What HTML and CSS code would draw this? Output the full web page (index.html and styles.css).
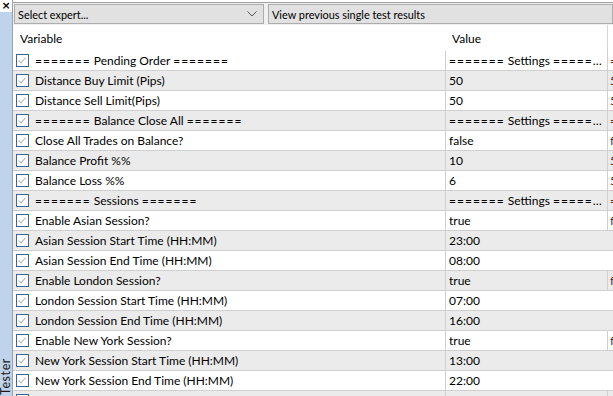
FILE: index.html
```html
<!DOCTYPE html>
<html lang="en">
<head>
  <meta charset="UTF-8" />
  <title>Strategy Tester - Inputs</title>
  <link rel="stylesheet" href="styles.css">
</head>
<body>
  <div class="side">
    <div class="side-close">×</div>
    <div class="side-bar"><span class="side-title">Tester</span></div>
  </div>

  <div class="main">
    <div class="toolbar">
      <div class="select">
        <span>Select expert...</span>
        <svg class="chev" width="10" height="6" viewBox="0 0 10 6"><polyline points="0.5,0.5 5,5 9.5,0.5" fill="none" stroke="#555" stroke-width="1"/></svg>
      </div>
      <div class="btn">View previous single test results</div>
    </div>

    <div class="grid">
      <div class="head">
        <div class="h-var">Variable</div>
        <div class="h-val">Value</div>
        <div class="h-extra"></div>
      </div>

      <div class="row"><div class="c-var"><i class="chk"></i><span class="eq">=======</span>&nbsp;Pending Order&nbsp;<span class="eq">=======</span></div><div class="c-val"><span class="eq">=======</span> Settings <span class="eq">=======</span></div><div class="c-extra">=</div></div>
      <div class="row"><div class="c-var"><i class="chk"></i>Distance Buy Limit (Pips)</div><div class="c-val">50</div><div class="c-extra">5</div></div>
      <div class="row"><div class="c-var"><i class="chk"></i>Distance Sell Limit(Pips)</div><div class="c-val">50</div><div class="c-extra">5</div></div>
      <div class="row"><div class="c-var"><i class="chk"></i><span class="eq">=======</span>&nbsp;Balance Close All&nbsp;<span class="eq">=======</span></div><div class="c-val"><span class="eq">=======</span> Settings <span class="eq">=======</span></div><div class="c-extra">=</div></div>
      <div class="row"><div class="c-var"><i class="chk"></i>Close All Trades on Balance?</div><div class="c-val">false</div><div class="c-extra">f</div></div>
      <div class="row"><div class="c-var"><i class="chk"></i>Balance Profit %%</div><div class="c-val">10</div><div class="c-extra">5</div></div>
      <div class="row"><div class="c-var"><i class="chk"></i>Balance Loss %%</div><div class="c-val">6</div><div class="c-extra">5</div></div>
      <div class="row"><div class="c-var"><i class="chk"></i><span class="eq">=======</span>&nbsp;Sessions&nbsp;<span class="eq">=======</span></div><div class="c-val"><span class="eq">=======</span> Settings <span class="eq">=======</span></div><div class="c-extra">=</div></div>
      <div class="row"><div class="c-var"><i class="chk"></i>Enable Asian Session?</div><div class="c-val">true</div><div class="c-extra">f</div></div>
      <div class="row"><div class="c-var"><i class="chk"></i>Asian Session Start Time (HH:MM)</div><div class="c-val">23:00</div><div class="c-extra empty"></div></div>
      <div class="row"><div class="c-var"><i class="chk"></i>Asian Session End Time (HH:MM)</div><div class="c-val">08:00</div><div class="c-extra empty"></div></div>
      <div class="row"><div class="c-var"><i class="chk"></i>Enable London Session?</div><div class="c-val">true</div><div class="c-extra">f</div></div>
      <div class="row"><div class="c-var"><i class="chk"></i>London Session Start Time (HH:MM)</div><div class="c-val">07:00</div><div class="c-extra empty"></div></div>
      <div class="row"><div class="c-var"><i class="chk"></i>London Session End Time (HH:MM)</div><div class="c-val">16:00</div><div class="c-extra empty"></div></div>
      <div class="row"><div class="c-var"><i class="chk"></i>Enable New York Session?</div><div class="c-val">true</div><div class="c-extra">f</div></div>
      <div class="row"><div class="c-var"><i class="chk"></i>New York Session Start Time (HH:MM)</div><div class="c-val">13:00</div><div class="c-extra empty"></div></div>
      <div class="row"><div class="c-var"><i class="chk"></i>New York Session End Time (HH:MM)</div><div class="c-val">22:00</div><div class="c-extra empty"></div></div>
      <div class="row"><div class="c-var"><i class="chk"></i></div><div class="c-val"></div><div class="c-extra">=</div></div>
    </div>
  </div>
</body>
</html>
```

FILE: styles.css
```css
* { margin: 0; padding: 0; box-sizing: border-box; }

body {
  width: 613px;
  height: 396px;
  overflow: hidden;
  display: flex;
  background: #fff;
  font-family: Lato, "Noto Sans", sans-serif;
  font-size: 12px;
  color: #000;
}

/* left docked tab */
.side {
  width: 13px;
  flex-shrink: 0;
  display: flex;
  flex-direction: column;
  border-right: 1px solid #a0a0a0;
}

.side-close {
  height: 12px;
  font-family: "DejaVu Sans", sans-serif;
  font-size: 11px;
  font-weight: bold;
  line-height: 12px;
  text-align: center;
  background: #fff;
}

.side-bar {
  flex: 1;
  background: #bfd3eb;
  display: flex;
  flex-direction: column;
  justify-content: flex-end;
  align-items: center;
}

.side-title {
  writing-mode: vertical-rl;
  transform: rotate(180deg);
  font-size: 12.5px;
  line-height: 12px;
  letter-spacing: 0.6px;
  color: #1a1a1a;
  padding-top: 1px;
}

.main {
  flex: 1;
  display: flex;
  flex-direction: column;
  overflow: hidden;
}

/* toolbar */
.toolbar {
  flex-shrink: 0;
  height: 23px;
  margin-top: 2px;
  border-top: 1px solid #a0a0a0;
  background: #f0f0f0;
  display: flex;
  gap: 4px;
  padding: 1px 0 1px 1px;
}

.select, .btn {
  height: 20px;
  border: 1px solid #adadad;
  background: #e1e1e1;
  display: flex;
  align-items: center;
  padding-left: 3px;
  white-space: nowrap;
  font-size: 10.9px;
}

.select {
  width: 250px;
  justify-content: space-between;
  padding-right: 6px;
}

.btn { flex: 1; }

/* inputs grid */
.grid {
  flex: 1;
  display: flex;
  flex-direction: column;
}

.head, .row {
  flex-shrink: 0;
  display: grid;
  grid-template-columns: 432px 162px 1fr;
}

.head {
  height: 26px;
  align-items: center;
}

.h-var { padding-left: 7px; }
.h-val { padding-left: 7px; }
.h-extra { align-self: stretch; border-left: 1px solid #d5d5d5; }

.row {
  height: 20px;
  border-bottom: 1px solid #cfcfcf;
}

.row:nth-child(odd) { background: #ebebeb; }

.row > div {
  display: flex;
  align-items: center;
  white-space: nowrap;
  overflow: hidden;
}

.c-var { padding-left: 3px; }

.row > .c-val {
  display: block;
  border-left: 1px solid #cfcfcf;
  padding: 0 4px 0 3px;
  line-height: 19px;
  text-overflow: ellipsis;
}

/* the "=" glyph is narrower in Lato than in the original UI font */
.eq { letter-spacing: 1px; }

.c-extra {
  border-left: 1px solid #cfcfcf;
  padding-left: 2px;
  color: #5a2b1a;
}

.c-extra.empty { border-left-color: transparent; }

.chk {
  width: 13px;
  height: 13px;
  border: 1px solid #3b6597;
  background: #fff;
  margin-right: 6px;
  flex-shrink: 0;
  position: relative;
}

.chk::after {
  content: "";
  position: absolute;
  left: 3px;
  top: 1px;
  width: 3px;
  height: 6px;
  border: solid #b4b4b4;
  border-width: 0 1px 1px 0;
  transform: rotate(40deg);
}
```
